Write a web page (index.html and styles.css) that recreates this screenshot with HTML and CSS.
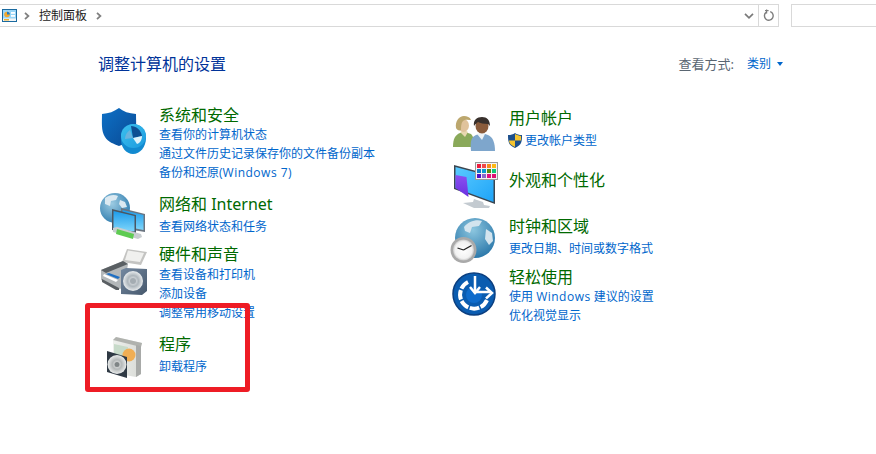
FILE: index.html
```html
<!DOCTYPE html>
<html lang="zh-CN">
<head>
<meta charset="utf-8">
<title>控制面板</title>
<link rel="stylesheet" href="styles.css">
</head>
<body>
<header class="toolbar">
  <div class="address">
    <svg class="cp-icon" viewBox="0 0 15 13" width="15" height="13"><rect x=".5" y=".5" width="14" height="12" fill="#9ad6f7" stroke="#1a6aa0"/><rect x="1" y="9.500" width="13" height="2.500" fill="#f5f5f5"/><rect x="2" y="10" width="5" height="1.500" fill="#f0b030"/><circle cx="5" cy="5.500" r="2.800" fill="#f4a82c"/><path d="M5 5.500V2.700A2.800 2.800 0 0 1 7.800 5.500Z" fill="#1f7ac0"/><rect x="9" y="3" width="4" height="1.800" fill="#fff"/><rect x="9" y="6" width="4" height="1.800" fill="#fff"/></svg>
    <svg class="crumb-sep" viewBox="0 0 6 8" width="6" height="8"><path d="M1 .8 4.400 4 1 7.200" fill="none" stroke="#808080" stroke-width="1.800"/></svg>
    <span class="crumb">控制面板</span>
    <svg class="crumb-sep" viewBox="0 0 6 8" width="6" height="8"><path d="M1 .8 4.400 4 1 7.200" fill="none" stroke="#808080" stroke-width="1.800"/></svg>
    <svg class="dropdown" viewBox="0 0 10 6" width="10" height="6"><path d="M1 .8 5 4.800 9 .8" fill="none" stroke="#7a7a7a" stroke-width="1.700"/></svg>
    <span class="refresh">
      <svg viewBox="0 0 12 13" width="12" height="13"><path d="M7.200 2.600A4.400 4.400 0 1 1 3 3.400" fill="none" stroke="#7d7d7d" stroke-width="1.400"/><path d="M3 .4v4.200h1.200V.4Z" fill="#7d7d7d"/><path d="M2 1h3.600v1.200H2Z" fill="#7d7d7d"/></svg>
    </span>
  </div>
  <div class="search"></div>
</header>

<main class="panel">
  <div class="panel-head">
    <h1 class="heading">调整计算机的设置</h1>
    <div class="view">
      <span class="view-label">查看方式:</span>
      <a class="view-value">类别</a>
      <span class="view-caret"></span>
    </div>
  </div>

  <div class="columns">
    <section class="col">
      <article class="cat h89">
        <svg class="cat-icon" viewBox="101 105 48 48">
          <defs>
            <linearGradient id="sh" x1="0" y1="0" x2="1" y2="1"><stop offset="0" stop-color="#0d70c6"/><stop offset="1" stop-color="#0a4a94"/></linearGradient>
            <linearGradient id="sc" x1="0" y1="0" x2="1" y2="1"><stop offset="0" stop-color="#3cc0ee"/><stop offset="1" stop-color="#1c9ade"/></linearGradient>
          </defs>
          <path d="M119 108c4 3.500 10 5.500 17 6 0 10 1.500 20-5 26-3 3-8 4-12 6-5-2-11-4-14-9-4-6-3-15-3-23 7-.5 12-2.500 17-6Z" fill="url(#sh)"/>
          <path d="M121 136c0-7 5-12 12-12s13 5 13 14c0 9-6 16-13 16s-12-7-12-14Z" fill="#128ad0"/>
          <ellipse cx="133.500" cy="136" rx="12.500" ry="12" fill="url(#sc)"/>
          <path d="M131 126c5 0 10 4 11 10l-9 2Z" fill="#0e4f92"/>
          <path d="M130 130l3 8-8 1c0-4 2-7 5-9Z" fill="#6ab4de"/>
          <path d="M133 138l9-2c0 4-2 7-5 8Z" fill="#dff2fa"/>
        </svg>
        <div class="cat-body">
          <h2 class="cat-title">系统和安全</h2>
          <a class="cat-link">查看你的计算机状态</a>
          <a class="cat-link">通过文件历史记录保存你的文件备份副本</a>
          <a class="cat-link">备份和还原(<span class="latin">Windows 7</span>)</a>
        </div>
      </article>

      <article class="cat h50">
        <svg class="cat-icon" viewBox="101 194 48 48">
          <defs>
            <radialGradient id="gl" cx=".4" cy=".35" r=".7"><stop offset="0" stop-color="#9ccbe2"/><stop offset="1" stop-color="#2f7cae"/></radialGradient>
            <linearGradient id="scr" x1="0" y1="0" x2="0" y2="1"><stop offset="0" stop-color="#1c9bea"/><stop offset="1" stop-color="#7fd6fb"/></linearGradient>
          </defs>
          <circle cx="115" cy="208" r="15" fill="url(#gl)"/>
          <path d="M105 198c4-3 9-4 13-2l-2 4-5 1-1 5-5-2Zm15 2 5 2 2 5-5 1-3-4Z" fill="#dbe9f1"/>
          <path d="M121 208l24 6v18l-24-4Z" fill="#6a7480"/>
          <path d="M122.500 210l21 5v15l-21-4Z" fill="url(#scr)"/>
          <path d="M112 209l24 6v18l-24-3Z" fill="#4a5662"/>
          <path d="M113.500 211l21 5v15.500l-21-3Z" fill="url(#scr)"/>
          <path d="M113 228l4-1 24 7 1 3-4 2-25-7Z" fill="#c8cdd0"/>
          <path d="M117 229l17 5-1 5-17-5Z" fill="#5ecb52"/>
        </svg>
        <div class="cat-body">
          <h2 class="cat-title">网络和 Internet</h2>
          <a class="cat-link mt3">查看网络状态和任务</a>
        </div>
      </article>

      <article class="cat h90">
        <svg class="cat-icon" viewBox="101 244 48 48">
          <defs>
            <linearGradient id="spk" x1="0" y1="0" x2="1" y2="1"><stop offset="0" stop-color="#7488a0"/><stop offset="1" stop-color="#46586c"/></linearGradient>
            <radialGradient id="cone"><stop offset="0" stop-color="#f4f5f6"/><stop offset=".55" stop-color="#aeb6bc"/><stop offset="1" stop-color="#e9ecee"/></radialGradient>
          </defs>
          <path d="M127 249l20 3-6 13-19-3Z" fill="#c4c4c2"/>
          <path d="M128 250.500l16 2.500-4 9-15-2Z" fill="#f0f0ee"/>
          <path d="M101 270l22-9 5 3-4 24-5 1-18-9Z" fill="#b4b8ba"/>
          <path d="M101 270l22-9 5 3-22 9Z" fill="#5a5f63"/>
          <path d="M102 279l17 9v2l-3 0-14-8Z" fill="#5a5f63"/>
          <path d="M104 274l14 6-2 2-13-6Z" fill="#fff"/>
          <path d="M106 274l12 5 2-2-11-4Z" fill="#1f6fc4"/>
          <path d="M121 270l5-2 21 1v22l-5 4-21-1Z" fill="url(#spk)"/>
          <circle cx="133" cy="281" r="10" fill="url(#cone)"/>
          <circle cx="133" cy="281" r="3" fill="#a4acb2"/>
        </svg>
        <div class="cat-body">
          <h2 class="cat-title">硬件和声音</h2>
          <a class="cat-link mt1">查看设备和打印机</a>
          <a class="cat-link">添加设备</a>
          <a class="cat-link">调整常用移动设置</a>
        </div>
      </article>

      <article class="cat">
        <svg class="cat-icon" viewBox="101 334 48 48">
          <defs>
            <linearGradient id="box" x1="0" y1="0" x2="1" y2="0"><stop offset="0" stop-color="#eef0ec"/><stop offset="1" stop-color="#d8dad6"/></linearGradient>
            <radialGradient id="cd"><stop offset="0" stop-color="#f4f4f4"/><stop offset=".5" stop-color="#b4b8b8"/><stop offset="1" stop-color="#e9ebeb"/></radialGradient>
          </defs>
          <path d="M113 340l3-3 26 6-1 3v28l-5 3-23-4Z" fill="url(#box)"/>
          <path d="M113 340l3-3 26 6-1 4Z" fill="#b0b2ae"/>
          <path d="M136 345l5 1v28l-5 3Z" fill="#a8aaa8"/>
          <path d="M114 344l14 3-1 12-13-2Z" fill="#c7dac9"/>
          <circle cx="129" cy="355" r="6.500" fill="#f0ae54"/>
          <path d="M107 351l20 6v21l-20-6Z" fill="#2f3944"/>
          <circle cx="117" cy="364.500" r="9.500" fill="url(#cd)"/>
          <circle cx="117" cy="364.500" r="2.500" fill="#7f8586"/>
        </svg>
        <div class="cat-body">
          <h2 class="cat-title">程序</h2>
          <a class="cat-link mt3">卸载程序</a>
        </div>
      </article>
    </section>

    <section class="col col-right">
      <article class="cat h62">
        <svg class="cat-icon" viewBox="451 108 48 48">
          <path d="M453 147c0-8 2-12 7-14l5-1 6 2c3 3 3 8 3 13Z" fill="#8aa95a"/>
          <path d="M460 132l5 5 3-5-3-2Z" fill="#e8d8b0"/>
          <ellipse cx="463.500" cy="125.500" rx="5.500" ry="6.500" fill="#e0c39c"/>
          <path d="M456 128c-1-7 3-12 8-12 3 0 6 1 7 4-2 0-6-1-8 1-2 2-2 6-2 9-2 1-4 0-5-2Z" fill="#bca76e"/>
          <path d="M471 151c-1-9 0-14 5-16l6-2 6 2c5 2 7 8 7 16Z" fill="#7ea6cc"/>
          <path d="M477 134l5 6 3-6-3-2Z" fill="#eef3f6"/>
          <ellipse cx="482" cy="126" rx="6.500" ry="7.500" fill="#8a5b3b"/>
          <path d="M474 126c-1-6 3-9 8-9s8 3 8 9l-2-2c-4 0-8-1-10-2-1 1-3 2-4 4Z" fill="#38302c"/>
        </svg>
        <div class="cat-body">
          <h2 class="cat-title">用户帐户</h2>
          <a class="cat-link mt3 with-shield">
            <svg class="uac" viewBox="0 0 14 15" width="14" height="15"><path d="M7 0c2 1.500 4 2 7 2 0 6 0 10-7 13C0 12 0 8 0 2c3 0 5-.5 7-2Z" fill="#1c4f8c"/><path d="M7 1v6.500h6c0-1.500.1-3 0-4.600C11 2.800 9 2.200 7 1Z" fill="#f4c430"/><path d="M7 7.500V14C2.500 12 1.200 10 1 7.500Z" fill="#f4c430"/></svg>
            更改帐户类型
          </a>
        </div>
      </article>

      <article class="cat h46">
        <svg class="cat-icon" viewBox="451 170 48 48">
          <defs>
            <linearGradient id="mon" x1="0" y1="0" x2="1" y2="1"><stop offset="0" stop-color="#5acaff"/><stop offset="1" stop-color="#1ea4f8"/></linearGradient>
            <linearGradient id="pur" x1="0" y1="0" x2="0" y2="1"><stop offset="0" stop-color="#8a50f0"/><stop offset="1" stop-color="#6a30e0"/></linearGradient>
          </defs>
          <path d="M454 165l41 11v28l-41-15Z" fill="#3c4650"/>
          <path d="M455.500 167l38 10v25l-38-14Z" fill="url(#mon)"/>
          <path d="M455.500 175l11 2 2 20-13-9Z" fill="url(#pur)"/>
          <path d="M474 199l9 3 1 3 6 1-1 2h-15l-11-5 10-1Z" fill="#c3cad0"/>
          <rect x="475.500" y="162.500" width="22" height="17" fill="#f4f4f4" stroke="#9a9a9a"/>
          <rect x="477" y="164" width="4" height="4" fill="#ee1c3c"/><rect x="482" y="164" width="4" height="4" fill="#f04848"/><rect x="487" y="164" width="4" height="4" fill="#f78a1e"/><rect x="492" y="164" width="4" height="4" fill="#fdb813"/>
          <rect x="477" y="169" width="4" height="4" fill="#0f7dc8"/><rect x="482" y="169" width="4" height="4" fill="#0a9ad0"/><rect x="487" y="169" width="4" height="4" fill="#5a8a10"/><rect x="492" y="169" width="4" height="4" fill="#10c878"/>
          <rect x="477" y="174" width="4" height="4" fill="#5010c8"/><rect x="482" y="174" width="4" height="4" fill="#8a6ac8"/><rect x="487" y="174" width="4" height="4" fill="#e0107c"/><rect x="492" y="174" width="4" height="4" fill="#e01070"/>
        </svg>
        <div class="cat-body">
          <h2 class="cat-title">外观和个性化</h2>
        </div>
      </article>

      <article class="cat h51">
        <svg class="cat-icon" viewBox="451 216 48 48">
          <defs>
            <radialGradient id="gl2" cx=".45" cy=".3" r=".8"><stop offset="0" stop-color="#8cc6df"/><stop offset="1" stop-color="#1f6ea3"/></radialGradient>
            <radialGradient id="clk"><stop offset="0" stop-color="#fff"/><stop offset=".8" stop-color="#f2f2f2"/><stop offset="1" stop-color="#c8c8c8"/></radialGradient>
          </defs>
          <circle cx="475" cy="238" r="20" fill="url(#gl2)"/>
          <path d="M464 227c4-5 12-8 18-6l-3 5-7 1-2 6-5-2Zm22 2 6 4 1 8-4 4-4-6Z" fill="#d3e4ee"/>
          <circle cx="463.500" cy="250" r="13" fill="#a9a9a9"/>
          <circle cx="463.500" cy="250" r="10.500" fill="url(#clk)"/>
          <path d="M463.500 250l-6-2M463.500 250l8-4.500" stroke="#222" stroke-width="1.300" fill="none"/>
        </svg>
        <div class="cat-body">
          <h2 class="cat-title">时钟和区域</h2>
          <a class="cat-link mt3">更改日期、时间或数字格式</a>
        </div>
      </article>

      <article class="cat">
        <svg class="cat-icon" viewBox="451 267 48 48">
          <circle cx="474" cy="294" r="21" fill="#0a5cb0"/>
          <circle cx="474" cy="294" r="21" fill="none" stroke="#0b3f80" stroke-width="1.500"/>
          <path d="M468 282A14 14 0 1 0 487 300" fill="none" stroke="#fff" stroke-width="4" stroke-dasharray="9.500 1.500"/>
          <circle cx="474" cy="295" r="8" fill="#0f6ccc"/>
          <path d="M475 276V292H490" fill="none" stroke="#fff" stroke-width="2.500"/>
          <path d="M470 287l5 6 5-6M486 287.500l6 5.500-6 5.500" fill="none" stroke="#fff" stroke-width="2.500"/>
        </svg>
        <div class="cat-body">
          <h2 class="cat-title">轻松使用</h2>
          <a class="cat-link">使用 <span class="latin">Windows</span> 建议的设置</a>
          <a class="cat-link">优化视觉显示</a>
        </div>
      </article>
    </section>
  </div>
</main>

<div class="annotation"></div>
</body>
</html>
```

FILE: styles.css
```css
* { box-sizing: border-box; }

html, body {
  margin: 0;
  height: 100%;
  overflow: hidden;
  background: #fff;
}

body {
  position: relative;
  font-family: "Noto Sans", "Noto Sans CJK SC", sans-serif;
  font-size: 12px;
}

.toolbar {
  display: flex;
  gap: 12px;
  height: 27px;
  padding-top: 4px;
  margin: 0 -1px;
}

.address {
  display: flex;
  align-items: center;
  flex: 0 0 780px;
  height: 23px;
  border: 1px solid #d9d9d9;
  padding-left: 2px;
}

.cp-icon { flex: none; }

.crumb-sep { flex: none; margin: 0 9px 0 7px; }

.crumb { color: #1a1a1a; margin-right: 2px; line-height: 21px; }

.dropdown { flex: none; margin-left: auto; margin-right: 4px; }

.refresh {
  display: flex;
  align-items: center;
  justify-content: center;
  flex: none;
  width: 20px;
  height: 21px;
  border-left: 1px solid #d9d9d9;
}

.search {
  flex: 1;
  height: 23px;
  border: 1px solid #d9d9d9;
}

.panel-head {
  display: flex;
  justify-content: space-between;
  align-items: center;
  height: 22px;
  margin-top: 26px;
  padding: 0 93px 0 98px;
}

.heading {
  margin: 0;
  font-size: 16px;
  font-weight: 400;
  line-height: 22px;
  color: #003399;
}

.view {
  display: flex;
  align-items: center;
  font-size: 12px;
  line-height: 18px;
  padding-bottom: 1px;
}

.view-label { font-size: 13px; line-height: 16px; color: #5a6672; margin-right: 13px; }

.view-value { color: #0066cc; }

.view-caret {
  width: 0;
  height: 0;
  margin-left: 6px;
  border-left: 3.500px solid transparent;
  border-right: 3.500px solid transparent;
  border-top: 4px solid #0066cc;
}

.columns {
  display: grid;
  grid-template-columns: 350px 1fr;
  padding: 30px 0 0 101px;
}

.col-right { padding-top: 3px; }

.cat { display: flex; gap: 10px; }

.h89 { height: 89px; }
.h50 { height: 50px; }
.h90 { height: 90px; }
.h62 { height: 62px; }
.h46 { height: 46px; }
.h51 { height: 51px; }

.cat-icon {
  flex: none;
  width: 48px;
  height: 48px;
  overflow: visible;
}

.cat-body { display: flex; flex-direction: column; align-items: flex-start; }

.cat-title {
  margin: 0;
  font-size: 16px;
  font-weight: 400;
  line-height: 20px;
  color: #006900;
  white-space: nowrap;
}

.cat-link {
  display: block;
  font-family: "Open Sans", "Noto Sans CJK SC", sans-serif;
  line-height: 19px;
  color: #0066cc;
  white-space: nowrap;
}

.latin { letter-spacing: .5px; }

.mt1 { margin-top: 1px; }
.mt3 { margin-top: 3px; }

.with-shield {
  display: flex;
  align-items: center;
  gap: 3px;
  margin-left: -1px;
}

.annotation {
  position: absolute;
  left: 85px;
  top: 303px;
  width: 165px;
  height: 89px;
  border: 5px solid #ee1c25;
  border-radius: 3px;
  pointer-events: none;
}
```
